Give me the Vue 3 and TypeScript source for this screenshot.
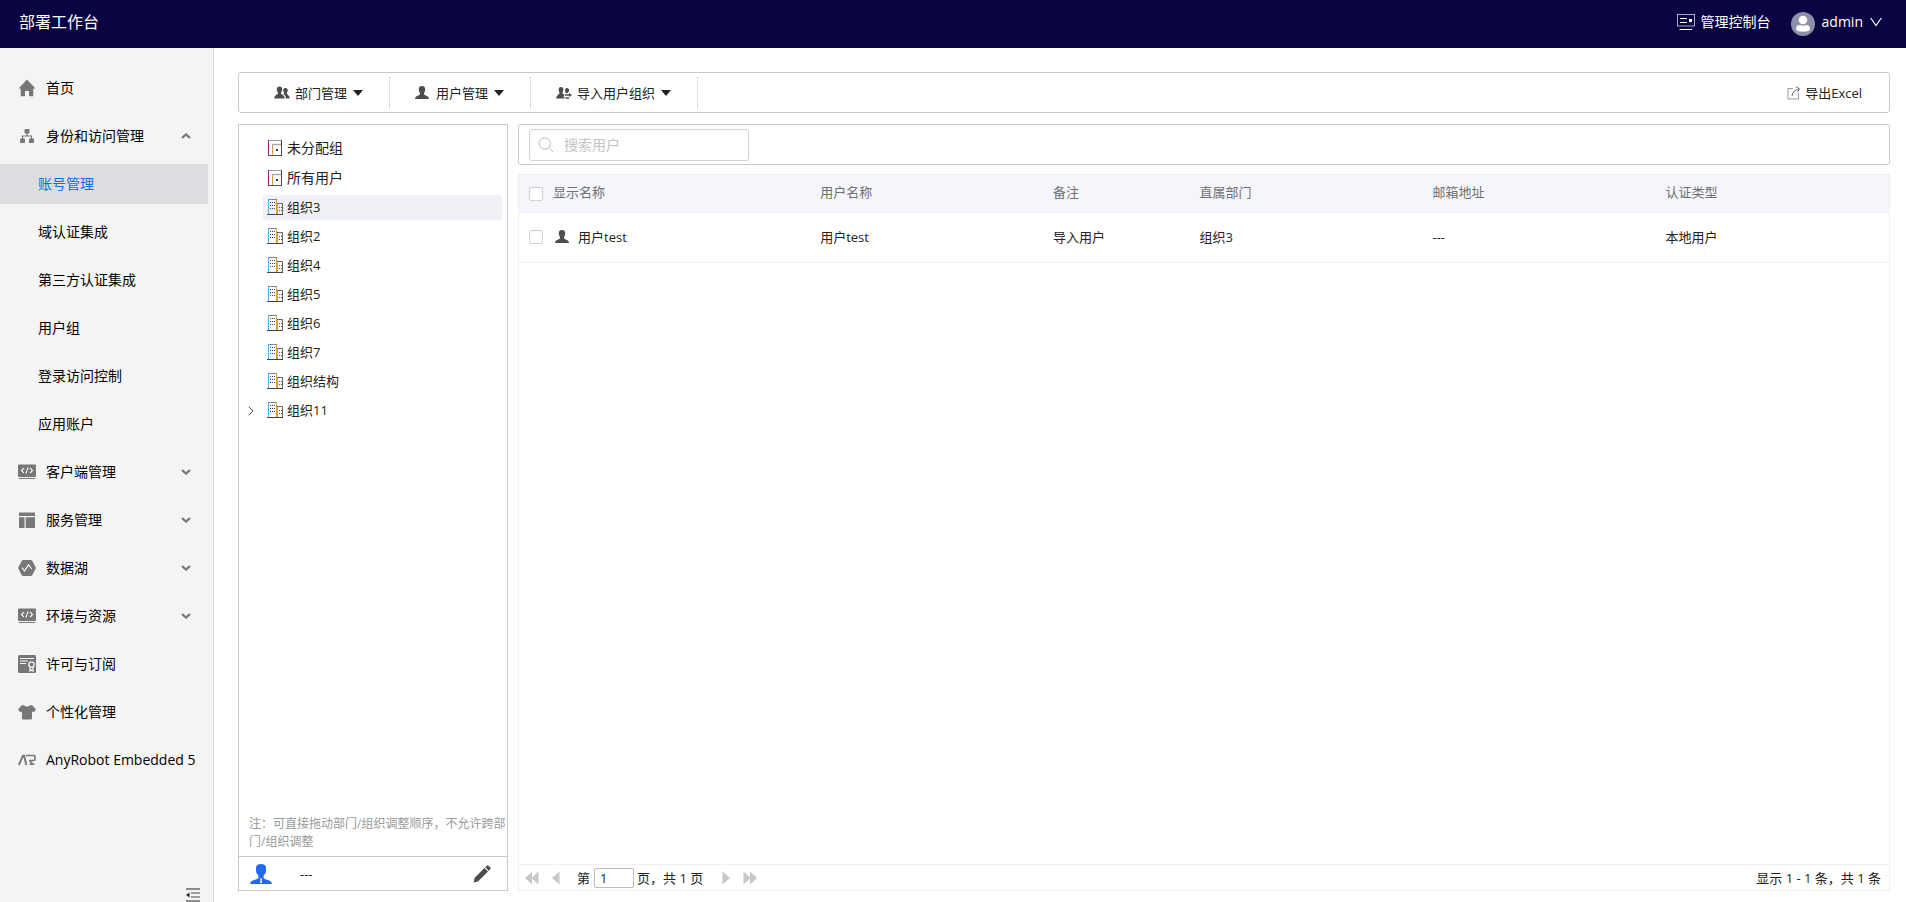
<script setup lang="ts">
import { ref } from 'vue'

interface NavItem {
  label: string
  icon: string
  arrow?: 'up' | 'down'
  children?: string[]
}

interface TreeNode {
  label: string
  icon: string
  group?: boolean
  expandable?: boolean
}

interface UserRow {
  id: number
  displayName: string
  userName: string
  remark: string
  department: string
  email: string
  authType: string
}

const navItems: NavItem[] = [
  { label: '首页', icon: 'home' },
  {
    label: '身份和访问管理',
    icon: 'org',
    arrow: 'up',
    children: ['账号管理', '域认证集成', '第三方认证集成', '用户组', '登录访问控制', '应用账户'],
  },
  { label: '客户端管理', icon: 'code', arrow: 'down' },
  { label: '服务管理', icon: 'layout', arrow: 'down' },
  { label: '数据湖', icon: 'lake', arrow: 'down' },
  { label: '环境与资源', icon: 'code', arrow: 'down' },
  { label: '许可与订阅', icon: 'license' },
  { label: '个性化管理', icon: 'shirt' },
  { label: 'AnyRobot Embedded 5', icon: 'robot' },
]

const toolbarMenus = [
  { label: '部门管理', icon: 'users' },
  { label: '用户管理', icon: 'user' },
  { label: '导入用户组织', icon: 'import' },
]

const treeNodes: TreeNode[] = [
  { label: '未分配组', icon: 'door', group: true },
  { label: '所有用户', icon: 'door', group: true },
  { label: '组织3', icon: 'building' },
  { label: '组织2', icon: 'building' },
  { label: '组织4', icon: 'building' },
  { label: '组织5', icon: 'building' },
  { label: '组织6', icon: 'building' },
  { label: '组织7', icon: 'building' },
  { label: '组织结构', icon: 'building' },
  { label: '组织11', icon: 'building', expandable: true },
]

const users: UserRow[] = [
  {
    id: 1,
    displayName: '用户test',
    userName: '用户test',
    remark: '导入用户',
    department: '组织3',
    email: '---',
    authType: '本地用户',
  },
]

const activeNav = ref('账号管理')
const activeNode = ref('组织3')
const keyword = ref('')
const page = ref('1')
const selected = ref<number[]>([])
</script>

<template>
  <div class="app">
    <svg class="sprite" aria-hidden="true">
      <symbol id="home" viewBox="0 0 18 18"><path d="M9 0.500 17.400 9.500H15.300V17.300H11V12H7V17.300H2.700V9.500H0.600Z" /></symbol>
      <symbol id="org" viewBox="0 0 18 18">
        <rect x="6.500" y="2" width="5" height="4.500" rx="1" /><rect x="2" y="11.500" width="5" height="4.500" rx="1" /><rect x="11" y="11.500" width="5" height="4.500" rx="1" />
        <path d="M9 6V9M4.500 12V9H13.500V12" fill="none" stroke="currentColor" stroke-width="1.200" />
      </symbol>
      <symbol id="code" viewBox="0 0 18 18">
        <rect x="0" y="1.500" width="18" height="12.500" rx="1" /><rect x="1" y="15" width="16" height="1" />
        <path d="M6 5 3.500 7.500 6 10M12 5 14.500 7.500 12 10M10 4.500 8 10.500" fill="none" stroke="#f4f4f4" stroke-width="1.100" />
      </symbol>
      <symbol id="layout" viewBox="0 0 18 18"><path d="M1 1.500H17V5H1ZM1 6.200H6.500V17H1ZM7.700 6.200H17V17H7.700Z" /></symbol>
      <symbol id="lake" viewBox="0 0 18 18">
        <path d="M5 1H13Q13.700 1 14.200 1.800L17.600 8.200Q18 9 17.600 9.800L14.200 16.200Q13.700 17 13 17H5Q4.300 17 3.800 16.200L0.400 9.800Q0 9 0.400 8.200L3.800 1.800Q4.300 1 5 1Z" />
        <path d="M4 8.500 6.500 12 10.500 5.800 13.800 10" fill="none" stroke="#f4f4f4" stroke-width="1.200" />
      </symbol>
      <symbol id="license" viewBox="0 0 18 18">
        <rect x="0" y="0" width="18" height="18" rx="1.500" />
        <path d="M2 3.500H16M2 6H10M2 8.500H8" fill="none" stroke="#f4f4f4" stroke-width="1.100" />
        <circle cx="13.500" cy="9.500" r="2.600" fill="none" stroke="#f4f4f4" stroke-width="1.400" />
        <path d="M12 12V16L13.500 14.800 15 16V12" fill="none" stroke="#f4f4f4" stroke-width="1.300" />
      </symbol>
      <symbol id="shirt" viewBox="0 0 18 18"><path d="M5.500 2Q9 5 12.500 2L14.500 2.600 18 6.500 15.800 9.200 14 8.500V15.200Q14 16.500 12.700 16.500H5.300Q4 16.500 4 15.200V8.500L2.200 9.200 0 6.500 3.500 2.600Z" /></symbol>
      <symbol id="robot" viewBox="0 0 18 18">
        <path d="M0.800 14 5 4.800H6.200L8.300 14" fill="none" stroke="currentColor" stroke-width="1.900" />
        <path d="M8 4.500H15.800Q17 4.500 17 5.700V8.300Q17 9.500 15.800 9.500H11M11.500 13.300H16.500M11.500 9.500 14.500 13" fill="none" stroke="currentColor" stroke-width="1.600" />
      </symbol>
      <symbol id="chevron" viewBox="0 0 10 10"><path d="M1 3.200 5 6.600 9 3.200" fill="none" stroke="currentColor" stroke-width="2.200" /></symbol>
      <symbol id="user" viewBox="0 0 16 16"><path d="M7 1C9.400 1 10.400 2.500 10.200 4.800C10.100 6.600 9.100 7.700 8.900 8.500C8.900 10 10 10.400 12 11Q13.800 11.600 14 14H0Q0.200 11.600 2 11C4 10.400 5.100 10 5.100 8.500C4.900 7.700 3.900 6.600 3.800 4.800C3.600 2.500 4.600 1 7 1Z" /></symbol>
      <symbol id="users" viewBox="0 0 16 16">
        <path d="M5.500 1.500C7.500 1.500 8.400 3 8.200 4.800C8 6.500 7 7.300 7 8.500C7.500 10 10.500 9.600 10.800 13.500H0.200C0.500 9.600 3.500 10 4 8.500C4 7.300 3 6.500 2.800 4.800C2.600 3 3.500 1.500 5.500 1.500Z" />
        <path d="M11.500 3C13.300 3 13.900 4.300 13.700 5.700C13.500 7 12.800 7.600 12.800 8.600C13.200 10 15.400 10 15.600 13.500H12C11.800 11 10.700 9.800 9.300 9.200C10.200 8.900 10.300 8.300 10.200 7.600C9.500 7 9.200 6.500 9.200 5.700C9.100 4.300 9.700 3 11.500 3Z" />
      </symbol>
      <symbol id="import" viewBox="0 0 16 16">
        <path d="M5 2C6.800 2 7.500 3.300 7.300 4.900C7.200 6.300 6.400 7 6.400 8C6.700 8.900 7.900 9.200 8.700 9.800L7.500 11.500 9 13.500H0.200C0.400 9.900 3.200 9.700 3.600 8C3.600 7 2.800 6.300 2.700 4.900C2.500 3.300 3.200 2 5 2Z" />
        <path d="M11 3C12.600 3 13.200 4.200 13 5.500C12.800 6.900 12 7.300 12.200 8H9.800C10 7.300 9.200 6.900 9 5.500C8.900 4.200 9.500 3 11 3Z" />
        <path d="M9 9.200H13V8L16 10 13 12V10.800H9ZM9.500 12.200H13V13.700H9.500Z" />
      </symbol>
      <symbol id="caret" viewBox="0 0 10 6"><path d="M0 0H10L5 6Z" /></symbol>
      <symbol id="door" viewBox="0 0 16 16">
        <path d="M1 15.500H15" stroke="#555" fill="none" /><path d="M1 0.500H15" stroke="#999" fill="none" />
        <path d="M1.500 0V16" stroke="#9a249a" fill="none" /><path d="M14.500 0V16" stroke="#444" fill="none" />
        <path d="M5.500 15V5" stroke="#d89a2e" fill="none" /><path d="M5 4.500H14" stroke="#aaa" stroke-width="1.500" fill="none" />
        <rect x="9" y="9" width="2" height="2" fill="#333" />
      </symbol>
      <symbol id="building" viewBox="0 0 16 16">
        <path d="M0 15.500H16" stroke="#444" fill="none" /><path d="M1.500 15V0.500" stroke="#58aeea" fill="none" />
        <path d="M1 0.500H10" stroke="#888" fill="none" /><path d="M9.500 1V15M10.500 5V15" stroke="#d9a036" fill="none" />
        <path d="M10 4.500H15.500V15" stroke="#666" fill="none" />
        <path d="M3 3.500H9M3 6.500H9M3 9.500H9" stroke="#444" stroke-dasharray="1 1" fill="none" />
        <path d="M12 8.500H15M12 11.500H15" stroke="#555" stroke-dasharray="1 1" fill="none" />
      </symbol>
      <symbol id="export" viewBox="0 0 14 14">
        <path d="M6 2.500H1V13H11.500V7" fill="none" stroke="#999" /><path d="M5 10C5.500 6 8 3.500 12 3" fill="none" stroke="#666" />
        <path d="M9 0.800 12.500 2.800 10.500 6" fill="none" stroke="#666" />
      </symbol>
      <symbol id="person" viewBox="0 0 22 20"><path d="M8 0.500Q11-0.500 14 0.500Q16 1.200 16 4V6.500Q16 9 14.500 10.500Q13.300 11.500 13.500 13.500Q14 15 18 16Q21.700 17 22 20H0Q0.300 17 4 16Q8 15 8.500 13.500Q8.700 11.500 7.500 10.500Q6 9 6 6.500V4Q6 1.200 8 0.500Z" /><path d="M9.800 14.500H12.200L11.500 16.200 12 19H10L10.500 16.200Z" fill="#fff" /></symbol>
      <symbol id="pencil" viewBox="0 0 18 18"><path d="M0.500 17.500 1.700 12.800 11.500 3 15 6.500 5.200 16.300ZM12.300 2.200 14 0.600Q14.800 0 15.600 0.700L17.300 2.400Q18 3.200 17.400 4L15.800 5.700Z" /></symbol>
      <symbol id="search" viewBox="0 0 16 16"><circle cx="6.700" cy="6.500" r="5.700" fill="none" stroke="currentColor" /><path d="M10.700 10.500 15 15" fill="none" stroke="currentColor" /></symbol>
      <symbol id="first" viewBox="0 0 14 14"><path d="M7 0.500V13.500L0 7ZM13.500 0.500V13.500L6.500 7Z" /></symbol>
      <symbol id="prev" viewBox="0 0 14 14"><path d="M10.500 0.500V13.500L3 7Z" /></symbol>
    </svg>

    <header class="topbar">
      <h1 class="brand">部署工作台</h1>
      <a class="console-link" href="#">
        <svg class="console-icon" viewBox="0 0 18 16">
          <rect x="0.500" y="0.500" width="17" height="11.500" fill="none" stroke="#a9a8c4" />
          <path d="M3 4.500H10M3 8.500H10M2.500 15.500H15" fill="none" stroke="#fff" /><rect x="12" y="5" width="3" height="3" fill="#fff" />
        </svg>
        管理控制台
      </a>
      <button class="account" type="button">
        <svg class="avatar" viewBox="0 0 24 24">
          <circle cx="12" cy="12" r="12" fill="#8c8fa9" /><circle cx="12" cy="8" r="4.300" fill="#fff" />
          <path d="M5 17Q5 13 9 13Q12 14.400 15 13Q19 13 19 17Q19 19.700 12 19.700Q5 19.700 5 17Z" fill="#fff" />
        </svg>
        admin
        <svg class="account-arrow" viewBox="0 0 12 10"><path d="M0.700 1 6 8.500 11.300 1" fill="none" stroke="#fff" stroke-width="1.200" /></svg>
      </button>
    </header>

    <div class="body">
      <aside class="sidebar">
        <nav class="nav">
          <template v-for="item in navItems" :key="item.label">
            <a class="nav-item" href="#">
              <svg class="nav-icon"><use :href="'#' + item.icon" /></svg>
              <span class="nav-label">{{ item.label }}</span>
              <svg v-if="item.arrow" class="nav-arrow" :class="item.arrow"><use href="#chevron" /></svg>
            </a>
            <a
              v-for="child in item.children"
              :key="child"
              class="nav-item nav-child"
              :class="{ active: child === activeNav }"
              href="#"
              @click.prevent="activeNav = child"
            >{{ child }}</a>
          </template>
        </nav>
        <button class="collapse" type="button" aria-label="收起菜单">
          <svg viewBox="0 0 14 14" width="14" height="14">
            <path d="M0 1H14M0 13H14" stroke="#222" stroke-width="1.200" /><path d="M5 5H14M5 9H14" stroke="#444" /><path d="M0 7 3.500 4.500V9.500Z" fill="#222" />
          </svg>
        </button>
      </aside>

      <main class="main">
        <div class="toolbar">
          <button v-for="menu in toolbarMenus" :key="menu.label" class="menu" type="button">
            <svg class="menu-icon"><use :href="'#' + menu.icon" /></svg>
            {{ menu.label }}
            <svg class="menu-caret"><use href="#caret" /></svg>
          </button>
          <button class="export" type="button">
            <svg class="export-icon"><use href="#export" /></svg>导出Excel
          </button>
        </div>

        <div class="panels">
          <section class="org-panel">
            <div class="tree-box">
              <ul class="tree">
                <li v-for="node in treeNodes" :key="node.label" class="tree-row">
                  <span class="tree-toggle">
                    <svg v-if="node.expandable" viewBox="0 0 6 10" width="6" height="10"><path d="M0.700 0.700 5 5 0.700 9.300" fill="none" stroke="#555" /></svg>
                  </span>
                  <button
                    class="tree-node"
                    :class="{ group: node.group, active: node.label === activeNode }"
                    type="button"
                    @click="activeNode = node.label"
                  >
                    <svg class="tree-icon"><use :href="'#' + node.icon" /></svg>{{ node.label }}
                  </button>
                </li>
              </ul>
              <p class="note">注：可直接拖动部门/组织调整顺序，不允许跨部门/组织调整</p>
            </div>
            <div class="owner">
              <svg class="owner-icon"><use href="#person" /></svg>
              <span class="owner-name">---</span>
              <button class="edit" type="button" aria-label="编辑"><svg><use href="#pencil" /></svg></button>
            </div>
          </section>

          <section class="user-panel">
            <div class="search-bar">
              <label class="search">
                <svg class="search-icon"><use href="#search" /></svg>
                <input v-model="keyword" type="text" placeholder="搜索用户" aria-label="搜索用户" />
              </label>
            </div>
            <div class="grid">
              <table>
                <colgroup>
                  <col class="c-check" /><col class="c-display" /><col class="c-wide" /><col class="c-dept" /><col class="c-wide" /><col class="c-wide" /><col />
                </colgroup>
                <thead>
                  <tr>
                    <th class="check"><input type="checkbox" aria-label="全选" /></th>
                    <th>显示名称</th>
                    <th>用户名称</th>
                    <th>备注</th>
                    <th>直属部门</th>
                    <th>邮箱地址</th>
                    <th>认证类型</th>
                  </tr>
                </thead>
                <tbody>
                  <tr v-for="user in users" :key="user.id">
                    <td class="check"><input v-model="selected" type="checkbox" :value="user.id" :aria-label="user.displayName" /></td>
                    <td><span class="name"><svg class="name-icon"><use href="#user" /></svg>{{ user.displayName }}</span></td>
                    <td>{{ user.userName }}</td>
                    <td>{{ user.remark }}</td>
                    <td>{{ user.department }}</td>
                    <td>{{ user.email }}</td>
                    <td>{{ user.authType }}</td>
                  </tr>
                </tbody>
              </table>
              <footer class="pager">
                <button type="button" disabled aria-label="首页"><svg><use href="#first" /></svg></button>
                <button type="button" disabled aria-label="上一页"><svg><use href="#prev" /></svg></button>
                <label class="page-field">第<input v-model="page" type="text" aria-label="页码" />页，共 1 页</label>
                <button class="flip" type="button" disabled aria-label="下一页"><svg><use href="#prev" /></svg></button>
                <button class="flip" type="button" disabled aria-label="末页"><svg><use href="#first" /></svg></button>
                <span class="total">显示 1 - 1 条，共 1 条</span>
              </footer>
            </div>
          </section>
        </div>
      </main>
    </div>
  </div>
</template>

<style>
body {
  margin: 0;
}
</style>

<style scoped>
.app {
  display: flex;
  flex-direction: column;
  height: 100vh;
  overflow: hidden;
  background: #fff;
  color: #222;
  font: 13px/20px "Open Sans", "Noto Sans CJK SC", sans-serif;
}
.app * {
  box-sizing: border-box;
}
.sprite {
  position: absolute;
  width: 0;
  height: 0;
}
svg {
  flex: none;
  fill: currentColor;
}
button {
  border: 0;
  padding: 0;
  background: none;
  color: inherit;
  font: inherit;
  cursor: pointer;
}
a {
  color: inherit;
  text-decoration: none;
}

.topbar {
  display: flex;
  flex: none;
  align-items: center;
  height: 48px;
  padding: 0 24px 4px 19px;
  background: #0a0542;
  color: #fff;
  font-size: 14px;
}
.brand {
  flex: 1;
  margin: 0;
  font-size: 16px;
  font-weight: 400;
}
.console-link {
  display: flex;
  align-items: center;
  gap: 6px;
  margin-right: 20px;
}
.console-icon {
  width: 18px;
  height: 16px;
}
.account {
  display: flex;
  align-items: center;
  gap: 7px;
}
.avatar {
  width: 24px;
  height: 24px;
  margin-top: 4px;
}
.account-arrow {
  width: 12px;
  height: 10px;
}

.body {
  display: flex;
  flex: 1;
  min-height: 0;
}
.sidebar {
  display: flex;
  flex: none;
  flex-direction: column;
  width: 214px;
  border-right: 1px solid #d9d9dc;
  background: #f4f4f4;
  color: #000;
  font-size: 14px;
}
.nav {
  display: flex;
  flex: 1;
  flex-direction: column;
  gap: 8px;
  min-height: 0;
  padding: 20px 5px 0 0;
}
.nav-item {
  display: flex;
  flex: none;
  align-items: center;
  gap: 10px;
  height: 40px;
  padding: 0 17px 0 18px;
}
.nav-icon {
  width: 18px;
  height: 18px;
  color: #777;
}
.nav-label {
  flex: 1;
  white-space: nowrap;
}
.nav-arrow {
  width: 10px;
  height: 10px;
  color: #777;
}
.nav-arrow.up {
  transform: rotate(180deg);
}
.nav-child {
  padding-left: 38px;
  border-radius: 0 2px 2px 0;
}
.nav-child.active {
  background: #dcdde1;
  color: #126ee3;
}
.collapse {
  align-self: flex-end;
  height: 14px;
  margin-right: 13px;
  line-height: 0;
}

.main {
  display: flex;
  flex: 1;
  flex-direction: column;
  gap: 11px;
  min-width: 0;
  padding: 24px 16px 11px 24px;
}
.toolbar {
  display: flex;
  flex: none;
  align-items: center;
  height: 41px;
  padding: 0 27px 0 10px;
  border: 1px solid #c9c9c9;
  border-radius: 3px;
}
.menu {
  display: flex;
  align-items: center;
  gap: 5px;
  height: 32px;
  padding: 0 26px 0 25px;
  border-right: 1px dotted #c4c4c4;
}
.menu-icon {
  width: 16px;
  height: 16px;
  color: #4d4d4d;
}
.menu-caret {
  width: 10px;
  height: 6px;
  margin-left: 1px;
}
.export {
  display: flex;
  align-items: center;
  gap: 4px;
  margin-left: auto;
}
.export-icon {
  width: 14px;
  height: 14px;
}

.panels {
  display: flex;
  flex: 1;
  gap: 10px;
  min-height: 0;
}
.org-panel {
  display: flex;
  flex: none;
  flex-direction: column;
  width: 270px;
}
.tree-box {
  display: flex;
  flex: 1;
  flex-direction: column;
  min-height: 0;
  border: 1px solid #c9c9c9;
  border-bottom: 0;
}
.tree {
  display: flex;
  flex: 1;
  flex-direction: column;
  gap: 4px;
  min-height: 0;
  margin: 0;
  padding: 10px 5px 0 9px;
  list-style: none;
}
.tree-row {
  display: flex;
  align-items: center;
}
.tree-toggle {
  display: flex;
  flex: none;
  width: 15px;
}
.tree-node {
  display: flex;
  flex: 1;
  align-items: center;
  gap: 4px;
  height: 25px;
  padding: 0 4px 1px;
  border-radius: 2px;
}
.tree-node.group {
  height: 26px;
  padding-bottom: 0;
  font-size: 14px;
}
.tree-node.active {
  background: #f0f1f7;
}
.tree-icon {
  width: 16px;
  height: 16px;
}
.note {
  margin: 0 0 5px;
  padding-left: 10px;
  color: #999;
  font-size: 12px;
  line-height: 18px;
}
.owner {
  display: flex;
  flex: none;
  align-items: center;
  height: 35px;
  padding: 0 16px 0 11px;
  border: 1px solid #c9c9c9;
}
.owner-icon {
  width: 22px;
  height: 20px;
  color: #2468f2;
}
.owner-name {
  flex: 1;
  margin-left: 28px;
}
.edit svg {
  display: block;
  width: 18px;
  height: 18px;
  color: #4d4d4d;
}

.user-panel {
  display: flex;
  flex: 1;
  flex-direction: column;
  gap: 9px;
  min-width: 0;
}
.search-bar {
  flex: none;
  height: 41px;
  padding: 4px 10px;
  border: 1px solid #c9c9c9;
  border-radius: 3px;
}
.search {
  display: flex;
  align-items: center;
  gap: 10px;
  width: 220px;
  height: 32px;
  padding: 0 8px;
  border: 1px solid #d0d0d8;
  border-radius: 3px;
}
.search-icon {
  width: 16px;
  height: 16px;
  color: #bbb;
}
.search input {
  flex: 1;
  min-width: 0;
  padding: 0;
  border: 0;
  outline: 0;
  background: none;
  font: inherit;
  font-size: 14px;
}
.search input::placeholder {
  color: #c3c3c3;
}
.grid {
  display: flex;
  flex: 1;
  flex-direction: column;
  min-height: 0;
  border: 1px solid #f0f0f2;
}
table {
  width: 100%;
  border-collapse: separate;
  border-spacing: 0;
  table-layout: fixed;
}
.c-check {
  width: 24px;
}
.c-display {
  width: 19.5%;
}
.c-wide {
  width: 17%;
}
.c-dept {
  width: 10.7%;
}
th {
  height: 38px;
  padding: 0 10px 4px;
  border-bottom: 1px solid #f0f0f2;
  background: #f5f6fc;
  color: #707070;
  font-weight: 400;
  text-align: left;
}
td {
  height: 50px;
  padding: 0 10px 2px;
  border-bottom: 1px solid #f0f0f2;
}
.check {
  padding: 0 0 0 10px;
}
td.check {
  padding-bottom: 2px;
}
.check input {
  display: block;
  width: 14px;
  height: 14px;
  margin: 0;
  border: 1px solid #d0d0d8;
  border-radius: 2px;
  background: #fff;
  appearance: none;
}
.check input:checked {
  background: #126ee3;
}
.name {
  display: flex;
  align-items: center;
  gap: 7px;
}
.name-icon {
  width: 16px;
  height: 16px;
  margin-left: 2px;
  color: #4d4d4d;
}
.pager {
  display: flex;
  align-items: center;
  height: 26px;
  margin-top: auto;
  padding: 0 8px 0 6px;
  border-top: 1px solid #f0f0f2;
}
.pager button {
  width: 14px;
  margin-right: 10px;
  color: #c8c8c8;
}
.pager button svg {
  display: block;
  width: 14px;
  height: 14px;
}
.pager .flip svg {
  transform: rotate(180deg);
}
.page-field {
  display: flex;
  align-items: center;
  margin: 0 16px 0 4px;
  white-space: pre;
}
.page-field input {
  width: 40px;
  height: 20px;
  margin: 0 3px 0 4px;
  padding: 0 5px;
  border: 1px solid #bbb;
  border-radius: 2px;
  color: inherit;
  font: inherit;
}
.total {
  margin-left: auto;
}
</style>
